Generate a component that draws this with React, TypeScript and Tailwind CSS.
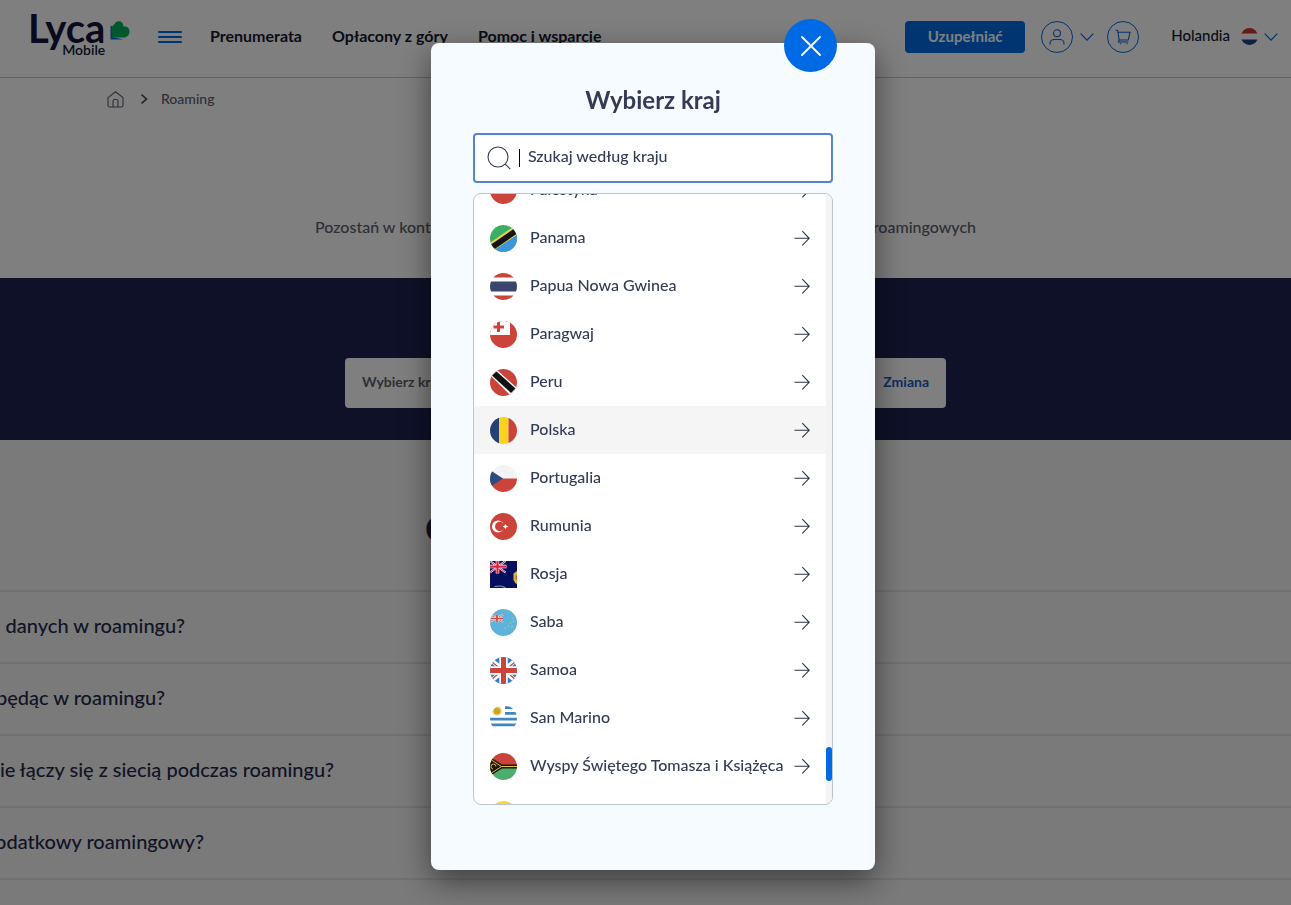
import type { ReactNode } from "react";

function ArrowIcon() {
  return (
    <svg className="size-4 shrink-0" viewBox="0 0 16 16" fill="none" stroke="#2b3447" strokeWidth="1.1" aria-hidden="true">
      <path d="M0.5 8.3H15M8.3 1.2L15.2 8.3L8.3 15.4" />
    </svg>
  );
}

function ChevronDown() {
  return (
    <svg className="h-2 w-3.5" viewBox="0 0 14 8" fill="none" stroke="#0069e0" strokeWidth="1.2" aria-hidden="true">
      <path d="M0.7 0.7L7 7.1L13.3 0.7" />
    </svg>
  );
}

function RoundFlag({ id, children }: { id: string; children: ReactNode }) {
  return (
    <svg className="size-[27px] shrink-0" viewBox="0 0 54 54" aria-hidden="true">
      <clipPath id={id}>
        <circle cx="27" cy="27" r="27" />
      </clipPath>
      <g clipPath={`url(#${id})`}>{children}</g>
    </svg>
  );
}

const RED = "#cc4339";

const flags: Record<string, ReactNode> = {
  red: (
    <RoundFlag id="f-red">
      <rect width="54" height="54" fill={RED} />
    </RoundFlag>
  ),
  tanzania: (
    <RoundFlag id="f-tz">
      <rect width="54" height="54" fill="#3aae62" />
      <path d="M0 54V46L54 10V54Z" fill="#3d95da" />
      <path d="M-4 38L49 2L60 16L5 52Z" fill="#f2cf45" />
      <path d="M2 39L47 8L53 18L8 49Z" fill="#141414" />
    </RoundFlag>
  ),
  thailand: (
    <RoundFlag id="f-th">
      <rect width="54" height="54" fill="#fff" />
      <rect width="54" height="9" fill={RED} />
      <rect y="17" width="54" height="20" fill="#3c466c" />
      <rect y="45" width="54" height="9" fill={RED} />
    </RoundFlag>
  ),
  tonga: (
    <RoundFlag id="f-to">
      <rect width="54" height="54" fill={RED} />
      <rect width="40" height="28" fill="#fff" />
      <path d="M14 2H20V9H28V15H20V22H14V15H7V9H14Z" fill={RED} />
    </RoundFlag>
  ),
  trinidad: (
    <RoundFlag id="f-tt">
      <rect width="54" height="54" fill={RED} />
      <path d="M0 12L12 0L56 40L42 54Z" fill="#fff" />
      <path d="M4 13L13 5L51 39L42 48Z" fill="#111" />
    </RoundFlag>
  ),
  romania: (
    <RoundFlag id="f-ro">
      <rect width="18" height="54" fill="#244076" />
      <rect x="18" width="19" height="54" fill="#fcd21e" />
      <rect x="37" width="17" height="54" fill={RED} />
    </RoundFlag>
  ),
  czechia: (
    <RoundFlag id="f-cz">
      <rect width="54" height="27" fill="#f3f3f5" />
      <rect y="27" width="54" height="27" fill={RED} />
      <path d="M0 10L26 27L0 44Z" fill="#2a4b80" />
    </RoundFlag>
  ),
  turkey: (
    <RoundFlag id="f-tr">
      <rect width="54" height="54" fill={RED} />
      <circle cx="16" cy="27" r="12" fill="#fff" />
      <circle cx="19.5" cy="27" r="9.5" fill={RED} />
      <path d="M31.5 22L33 25.5L37 27L33 28.5L31.5 32L29 29L25.5 27L29 25Z" fill="#fff" />
    </RoundFlag>
  ),
  turks: (
    <svg className="size-[27px] shrink-0" viewBox="0 0 54 54" aria-hidden="true">
      <rect width="54" height="54" fill="#04105e" />
      <path d="M0 0L31 23M31 0L0 23" stroke="#fff" strokeWidth="4" />
      <path d="M0 0L31 23M31 0L0 23" stroke="#e02040" strokeWidth="2" />
      <path d="M15 0V25M0 11H33" stroke="#fff" strokeWidth="7" />
      <path d="M15 0V25M0 11H33" stroke="#e02040" strokeWidth="4.5" />
      <path d="M54 20L47 25V38Q49 44 54 46Z" fill="#e0b23e" />
      <path d="M51 29H54V37H51Z" fill="#b96b42" />
      <path d="M9 51Q22 48 31 53" stroke="#8fa3c8" strokeWidth="2" fill="none" />
    </svg>
  ),
  tuvalu: (
    <RoundFlag id="f-tv">
      <rect width="54" height="54" fill="#5cb3dc" />
      <path d="M0 11L26 26M26 11L0 26" stroke="#fff" strokeWidth="3" />
      <path d="M0 11L26 26M26 11L0 26" stroke={RED} strokeWidth="1.6" />
      <path d="M14 11V27M0 19H26" stroke="#fff" strokeWidth="5" />
      <path d="M14 11V27M0 19H26" stroke={RED} strokeWidth="3.4" />
      <g fill="#b7c98a">
        <circle cx="45" cy="18" r="1.6" />
        <circle cx="47" cy="25" r="1.6" />
        <circle cx="41" cy="28" r="1.6" />
        <circle cx="37" cy="34" r="1.6" />
        <circle cx="30" cy="38" r="1.6" />
        <circle cx="44" cy="35" r="1.6" />
      </g>
    </RoundFlag>
  ),
  britain: (
    <RoundFlag id="f-gb">
      <rect width="54" height="54" fill="#3a78bd" />
      <path d="M0 4L54 50M54 4L0 50" stroke="#fff" strokeWidth="9" />
      <path d="M4 10L20 23M50 10L34 23M4 44L20 31M50 44L34 31" stroke={RED} strokeWidth="2.5" />
      <path d="M27 0V54M0 27H54" stroke="#fff" strokeWidth="17" />
      <path d="M27 0V54M0 27H54" stroke={RED} strokeWidth="10" />
    </RoundFlag>
  ),
  uruguay: (
    <RoundFlag id="f-uy">
      <rect width="54" height="54" fill="#fff" />
      <path d="M30 5H54M30 16.5H54M0 28H54M0 39.5H54" stroke="#3f86c4" strokeWidth="5.5" />
      <circle cx="14" cy="12" r="10" fill="#efe0a0" />
      <circle cx="14" cy="12" r="7" fill="#cba61e" />
    </RoundFlag>
  ),
  vanuatu: (
    <RoundFlag id="f-vu">
      <rect width="54" height="27" fill={RED} />
      <rect y="27" width="54" height="27" fill="#4cae6c" />
      <path d="M0 8L24 23H54V31H24L0 46Z" fill="#151515" />
      <path d="M0 12L23 27L0 42M23 27H54" stroke="#e4c338" strokeWidth="2" fill="none" />
      <path d="M12 27A5 5 0 1 0 6 32" stroke="#e4c338" strokeWidth="2" fill="none" />
    </RoundFlag>
  ),
  yellow: (
    <RoundFlag id="f-ye">
      <rect width="54" height="54" fill="#f8d62e" />
    </RoundFlag>
  ),
};

const countries = [
  { name: "Palestyna", flag: "red" },
  { name: "Panama", flag: "tanzania" },
  { name: "Papua Nowa Gwinea", flag: "thailand" },
  { name: "Paragwaj", flag: "tonga" },
  { name: "Peru", flag: "trinidad" },
  { name: "Polska", flag: "romania", active: true },
  { name: "Portugalia", flag: "czechia" },
  { name: "Rumunia", flag: "turkey" },
  { name: "Rosja", flag: "turks" },
  { name: "Saba", flag: "tuvalu" },
  { name: "Samoa", flag: "britain" },
  { name: "San Marino", flag: "uruguay" },
  { name: "Wyspy Świętego Tomasza i Książęca", flag: "vanuatu" },
  { name: "", flag: "yellow" },
];

const questions = [
  { text: "danych w roamingu?", box: "w-[185px]" },
  { text: "będąc w roamingu?", box: "w-[165px]" },
  { text: "ie łączy się z siecią podczas roamingu?", box: "w-[334px]" },
  { text: "dodatkowy roamingowy?", box: "w-[204px]" },
];

function Header() {
  return (
    <header className="flex h-[78px] items-center justify-between border-b border-[#c4c6cc] pr-[13px] pb-1 pl-7">
      <div className="flex items-center">
        <a href="#" className="flex w-[102px] items-start justify-between pb-1.5 text-[#14143c]">
          <span className="flex flex-col items-end">
            <span className="text-[40px] leading-8 font-bold">Lyca</span>
            <span className="text-sm leading-3 font-semibold">Mobile</span>
          </span>
          <svg className="mt-2 h-5 w-5 shrink-0" viewBox="0 0 20 20" aria-hidden="true">
            <path d="M0.5 5.5L3 7V17L13.5 19.5H0.5Z" fill="#0a6fe0" />
            <path d="M2.2 17.6V7.5A4 4 0 0 1 4.4 4.2A4.6 4.6 0 0 1 13.2 4.8V6.2H14.5A5 5 0 0 1 19.5 11.5C19.5 14.8 17 17.6 13.8 17.6Z" fill="#00b35a" />
          </svg>
        </a>
        <button type="button" aria-label="Menu" className="ml-7 flex w-6 flex-col gap-[3px]">
          <span className="h-0.5 rounded bg-[#0069e0]" />
          <span className="h-0.5 rounded bg-[#0069e0]" />
          <span className="h-0.5 rounded bg-[#0069e0]" />
        </button>
        <nav className="ml-7 flex gap-[30px] pb-0.5 text-base font-bold whitespace-nowrap text-[#14182e]">
          <a href="#">Prenumerata</a>
          <a href="#">Opłacony z góry</a>
          <a href="#">Pomoc i wsparcie</a>
        </nav>
      </div>
      <div className="flex items-center">
        <button type="button" className="h-8 w-[120px] rounded bg-[#006ae4] text-[15px] font-bold text-white">
          Uzupełniać
        </button>
        <button type="button" aria-label="Konto" className="ml-4 flex items-center gap-[7px]">
          <span className="flex size-8 items-center justify-center rounded-full border border-[#0069e0]">
            <svg className="size-4" viewBox="0 0 16 16" fill="none" stroke="#0069e0" strokeWidth="1.1" aria-hidden="true">
              <circle cx="8" cy="4.2" r="3.4" />
              <path d="M1 15.4V14.5A4 4 0 0 1 5 10.5H11A4 4 0 0 1 15 14.5V15.4" />
            </svg>
          </span>
          <ChevronDown />
        </button>
        <button type="button" aria-label="Koszyk" className="ml-[13px] flex size-8 items-center justify-center rounded-full border border-[#0069e0]">
          <svg className="size-4" viewBox="0 0 16 16" fill="none" stroke="#0069e0" strokeWidth="1.1" aria-hidden="true">
            <path d="M0.5 1.2H2.6L4.2 11H13.2L15 3.2H3M4.2 11L3.5 13H13.2" />
            <path d="M5 14.8H6.2M11.5 14.8H12.7" />
          </svg>
        </button>
        <button type="button" className="ml-8 flex items-center text-[15px] font-medium text-[#14182e]">
          <span className="pb-0.5">Holandia</span>
          <svg className="ml-[11px] size-[17px]" viewBox="0 0 34 34" aria-hidden="true">
            <clipPath id="f-nl">
              <circle cx="17" cy="17" r="17" />
            </clipPath>
            <g clipPath="url(#f-nl)">
              <rect width="34" height="34" fill="#fff" />
              <rect width="34" height="11" fill="#c8372d" />
              <rect y="23" width="34" height="11" fill="#1e4480" />
            </g>
          </svg>
          <span className="ml-1.5">
            <ChevronDown />
          </span>
        </button>
      </div>
    </header>
  );
}

function CountryDialog() {
  return (
    <div role="dialog" aria-modal="true" aria-labelledby="dialog-title" className="relative w-[444px] rounded-lg bg-[#f5fbff] px-[42px] pb-[65px] text-[#333c55] shadow-[0_11px_32px_rgba(0,0,0,0.5)]">
      <button type="button" aria-label="Zamknij" className="absolute -top-6 right-[38px] flex size-[53px] items-center justify-center rounded-full bg-[#006ae4]">
        <svg className="size-5" viewBox="0 0 20 20" stroke="#fff" strokeWidth="1.8" strokeLinecap="round" aria-hidden="true">
          <path d="M1 1L19 19M19 1L1 19" />
        </svg>
      </button>
      <h2 id="dialog-title" className="pt-[41px] pb-[17px] text-center text-2xl font-bold">
        Wybierz kraj
      </h2>
      <label className="flex h-[50px] items-center rounded border-2 border-[#5584cb] bg-white pl-3">
        <svg className="size-6 shrink-0" viewBox="0 0 24 24" fill="none" stroke="#333c55" strokeWidth="1.1" aria-hidden="true">
          <circle cx="11" cy="11" r="10" />
          <path d="M18.2 18.2L23.4 23.2" />
        </svg>
        <span className="ml-2 h-[18px] w-px bg-black" />
        <input
          type="text"
          aria-label="Szukaj według kraju"
          placeholder="Szukaj według kraju"
          className="ml-2 w-full bg-transparent pb-1 text-base font-medium outline-none placeholder:text-[#333c55]"
        />
      </label>
      <div className="mt-2.5 flex h-[612px] overflow-hidden rounded-lg border border-[#bac5d2] bg-white">
        <ul className="-mt-7 min-w-0 grow">
          {countries.map((c) => (
            <li key={c.flag} className={c.active ? "bg-[#f5f5f5]" : ""}>
              <button type="button" className="flex h-12 w-full items-center pr-4 pl-4 text-left">
                {flags[c.flag]}
                <span className="ml-[13px] grow pb-0.5 text-base font-medium whitespace-nowrap">{c.name}</span>
                <ArrowIcon />
              </button>
            </li>
          ))}
        </ul>
        <div className="flex w-1.5 shrink-0 flex-col justify-end bg-[#f3f3f3] pb-[23px]">
          <div className="h-[34px] rounded-full bg-[#006ae4]" />
        </div>
      </div>
    </div>
  );
}

export default function App() {
  return (
    <div className="h-screen overflow-hidden bg-white font-['Lato','Open_Sans',sans-serif]">
      <Header />
      <main>
        <section className="h-[200px]">
          <nav aria-label="Breadcrumb" className="flex items-center pt-[11px] pl-[107px] text-sm font-medium text-[#5c606c]">
            <a href="#" aria-label="Start">
              <svg className="size-[17px]" viewBox="0 0 17 17" fill="none" stroke="#5c606c" strokeWidth="1.1" aria-hidden="true">
                <path d="M1 6.6L8.5 0.8L16 6.6V14.2A1.8 1.8 0 0 1 14.2 16H2.8A1.8 1.8 0 0 1 1 14.2ZM6 16V10A1.6 1.6 0 0 1 7.6 8.5H9.4A1.6 1.6 0 0 1 11 10V16" />
              </svg>
            </a>
            <svg className="ml-4 h-2.5 w-2" viewBox="0 0 8 10" fill="none" stroke="#444856" strokeWidth="1.6" aria-hidden="true">
              <path d="M1.5 0.7L6.5 5L1.5 9.3" />
            </svg>
            <span className="ml-[13px]">Roaming</span>
          </nav>
          <p className="mx-auto mt-[106px] flex w-[661px] justify-between text-base font-medium text-[#5c606c]">
            <span>Pozostań w konta</span>
            <span>roamingowych</span>
          </p>
        </section>
        <section className="h-[162px] bg-[#1d2250] pt-20">
          <div className="mx-auto flex h-[50px] w-[601px] items-center justify-between rounded bg-white px-[17px] pb-0.5 text-sm font-bold">
            <span className="text-[#5c606c]">Wybierz kraj</span>
            <button type="button" className="text-[#2059bc]">Zmiana</button>
          </div>
        </section>
        <section className="bg-[#f5f5f5]">
          <h2 className="mx-auto h-[150px] w-[441px] pt-[68px] text-4xl font-bold text-[#1d2250]">C</h2>
          {questions.map((q) => (
            <div key={q.text} className="h-[72px] border-t-2 border-[#e2e2e3]">
              <button type="button" className={`flex h-full items-center justify-end overflow-hidden pb-1 text-xl font-medium whitespace-nowrap text-[#24284a] ${q.box}`}>
                {q.text}
              </button>
            </div>
          ))}
          <div className="h-[72px] border-t-2 border-[#e2e2e3]" />
        </section>
      </main>
      <div className="fixed inset-0 flex items-start justify-center bg-black/50 pt-[43px] pl-[15px]">
        <CountryDialog />
      </div>
    </div>
  );
}
